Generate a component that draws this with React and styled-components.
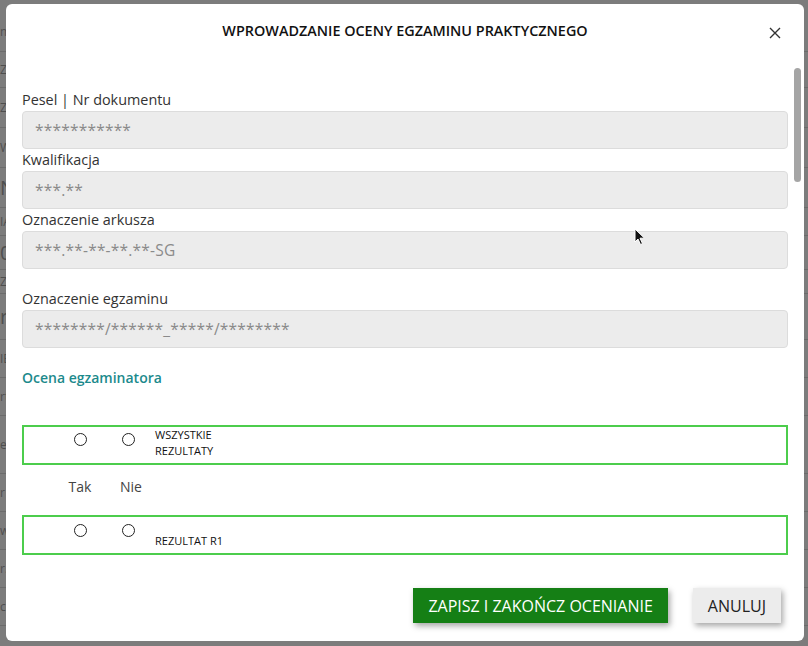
import React from "react";
import styled, { createGlobalStyle } from "styled-components";

const Global = createGlobalStyle`
  html, body { margin: 0; padding: 0; }
  body {
    width: 808px; height: 646px; overflow: hidden;
    background: #7c7c7c;
    font-family: "Open Sans", "Noto Sans", sans-serif;
  }
  * { box-sizing: border-box; }
`;

const Backdrop = styled.div`
  position: relative;
  width: 808px;
  height: 646px;
  padding: 4px 4px 5px 6px;
  display: flex;
`;

const PageBehind = styled.div`
  position: absolute;
  inset: 0;
  display: flex;
  flex-direction: column;
  padding-top: 12px;
  color: #2a2a2a;
  font-size: 14px;
  opacity: 0.55;
`;

const BehindRow = styled.div`
  height: ${(p) => p.h || 38}px;
  border-bottom: 1px solid #5e5e5e;
  display: flex;
  align-items: center;
  font-size: ${(p) => p.fs || 12}px;
  white-space: nowrap;
`;

const Modal = styled.div`
  position: relative;
  flex: 1;
  background: #fff;
  border-radius: 6px;
  display: flex;
  flex-direction: column;
  overflow: hidden;
`;

const Header = styled.div`
  height: 52px;
  display: flex;
  align-items: center;
  justify-content: center;
  position: relative;
`;

const Title = styled.h1`
  margin: 0;
  font-size: 14.4px;
  font-weight: 600;
  color: #111;
`;

const Close = styled.button`
  position: absolute;
  right: 22px;
  top: 22px;
  width: 14px;
  height: 14px;
  padding: 0;
  border: 0;
  background: none;
  display: flex;
  align-items: center;
  justify-content: center;
`;

const Body = styled.div`
  flex: 1;
  padding: 33px 16px 0 16px;
  display: flex;
  flex-direction: column;
`;

const Label = styled.label`
  display: block;
  height: 22px;
  line-height: 21px;
  font-size: 14.4px;
  color: #333;
  margin-top: ${(p) => p.mt || 0}px;
`;

const Field = styled.div`
  height: 38px;
  background: #ececec;
  border: 1px solid #dcdcdc;
  border-radius: 4px;
  display: flex;
  align-items: center;
  padding: 0 12px;
  font-size: 15.5px;
  color: #8a8a8a;
  letter-spacing: 0.2px;
`;

const Section = styled.div`
  margin-top: 20px;
  font-size: 14px;
  font-weight: 600;
  color: #1c8a8c;
  line-height: 20px;
`;

const Choices = styled.div`
  margin-top: 37px;
  display: flex;
  flex-direction: column;
`;

const Box = styled.div`
  border: 2px solid #4ccd4c;
  display: grid;
  grid-template-columns: 32px 48px 48px 1fr;
  min-height: 40px;
`;

const RadioCell = styled.div`
  display: flex;
  justify-content: center;
  padding-top: ${(p) => p.pt}px;
`;

const Radio = styled.span`
  width: 13px;
  height: 13px;
  border-radius: 50%;
  border: 1.2px solid #222;
  background: #fff;
`;

const BoxText = styled.div`
  display: flex;
  flex-direction: column;
  justify-content: flex-end;
  padding: 0 0 4px 3px;
  font-size: 11px;
  line-height: 16px;
  color: #111;
  text-transform: uppercase;
`;

const Legend = styled.div`
  display: grid;
  grid-template-columns: 34px 48px 48px 1fr;
  height: 50px;
  padding-top: 12px;
  align-items: start;
  font-size: 14px;
  line-height: 20px;
  color: #444;
`;

const LegendCell = styled.span`
  text-align: center;
  padding-left: ${(p) => p.pl || 0}px;
`;

const Footer = styled.div`
  display: flex;
  justify-content: flex-end;
  gap: 25px;
  padding: 0 23px 18px 0;
`;

const Button = styled.button`
  height: 35px;
  padding: 0 15px;
  border: 0;
  border-radius: 0;
  font-family: inherit;
  font-size: 16px;
  text-transform: uppercase;
  background: ${(p) => (p.primary ? "#157f15" : "#ececec")};
  color: ${(p) => (p.primary ? "#fff" : "#222")};
  box-shadow: 2px 3px 6px rgba(0, 0, 0, 0.35);
`;

const Thumb = styled.div`
  position: absolute;
  right: 3px;
  top: 64px;
  width: 7px;
  height: 114px;
  border-radius: 4px;
  background: #a5a5a5;
`;

const Cursor = styled.svg`
  position: absolute;
  left: 634px;
  top: 228px;
`;

const fields = [
  { label: "Pesel | Nr dokumentu", value: "***********" },
  { label: "Kwalifikacja", value: "***.**" },
  { label: "Oznaczenie arkusza", value: "***.**-**-**.**-SG" },
  { label: "Oznaczenie egzaminu", value: "********/******_*****/********", mt: 19 },
];

export default function App() {
  return (
    <>
      <Global />
      <Backdrop>
        <PageBehind>
          <BehindRow h={40}>m</BehindRow>
          <BehindRow h={36}>ZA</BehindRow>
          <BehindRow h={40}>ZZ</BehindRow>
          <BehindRow h={40}>W</BehindRow>
          <BehindRow h={40} fs={20}>N</BehindRow>
          <BehindRow h={28}>IA</BehindRow>
          <BehindRow h={34} fs={20}>0</BehindRow>
          <BehindRow h={24}>ZZ</BehindRow>
          <BehindRow h={46} fs={20}>r</BehindRow>
          <BehindRow h={38}>IE</BehindRow>
          <BehindRow h={38}>rt</BehindRow>
          <BehindRow h={58}>ek</BehindRow>
          <BehindRow h={38}>r</BehindRow>
          <BehindRow h={38}>w</BehindRow>
          <BehindRow h={38}>r.</BehindRow>
          <BehindRow h={38}>cc</BehindRow>
        </PageBehind>
        <Modal>
          <Header>
            <Title>WPROWADZANIE OCENY EGZAMINU PRAKTYCZNEGO</Title>
            <Close aria-label="Zamknij">
              <svg width="12" height="12" viewBox="0 0 12 12">
                <path d="M1 1 L11 11 M11 1 L1 11" stroke="#333" strokeWidth="1.4" fill="none" />
              </svg>
            </Close>
          </Header>
          <Body>
            {fields.map((f) => (
              <div key={f.label}>
                <Label mt={f.mt}>{f.label}</Label>
                <Field>{f.value}</Field>
              </div>
            ))}
            <Section>Ocena egzaminatora</Section>
            <Choices>
              <Box>
                <span />
                <RadioCell pt={6}><Radio /></RadioCell>
                <RadioCell pt={6}><Radio /></RadioCell>
                <BoxText>
                  <span>Wszystkie</span>
                  <span>rezultaty</span>
                </BoxText>
              </Box>
              <Legend>
                <span />
                <LegendCell>Tak</LegendCell>
                <LegendCell pl={6}>Nie</LegendCell>
              </Legend>
              <Box>
                <span />
                <RadioCell pt={7}><Radio /></RadioCell>
                <RadioCell pt={7}><Radio /></RadioCell>
                <BoxText>
                  <span>Rezultat R1</span>
                </BoxText>
              </Box>
            </Choices>
          </Body>
          <Footer>
            <Button primary>Zapisz i zakończ ocenianie</Button>
            <Button>Anuluj</Button>
          </Footer>
          <Thumb />
        </Modal>
        <Cursor width="12" height="18" viewBox="0 0 12 18">
          <path d="M1 1 L1 14 L4 11 L6.5 16.5 L8.5 15.6 L6 10.2 L10.5 10.2 Z" fill="#111" stroke="#fff" strokeWidth="1" />
        </Cursor>
      </Backdrop>
    </>
  );
}
